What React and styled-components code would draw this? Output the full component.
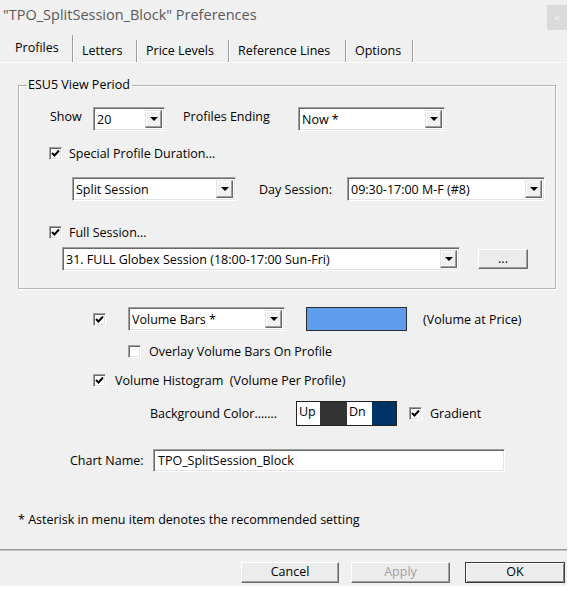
import React from 'react'
import styled, { createGlobalStyle } from 'styled-components'

const GlobalStyle = createGlobalStyle`
  body {
    margin: 0;
    background: #fff;
    font-family: "Open Sans", "Noto Sans", sans-serif;
    font-size: 12.5px;
    color: #000;
  }
`

const Window = styled.div`
  width: 567px;
  height: 586px;
  background: #f0f0f0;
  display: flex;
  flex-direction: column;
`

const TitleBar = styled.div`
  height: 30px;
  display: flex;
  justify-content: space-between;
  align-items: flex-start;
`

const Title = styled.div`
  padding: 5px 0 0 3px;
  font-size: 14.5px;
  color: #5a5a5a;
  white-space: nowrap;
`

const CloseBox = styled.div`
  margin-top: 5px;
  width: 20px;
  height: 25px;
  background: #dadada;
  color: #f4f4f4;
  font-size: 11px;
  display: flex;
  align-items: center;
  justify-content: center;
`

const TabStrip = styled.div`
  margin-top: 5px;
  height: 27px;
  padding-left: 10px;
  display: flex;
  align-items: flex-end;
  border-bottom: 1px solid #fbfbfb;
`

const Tab = styled.div`
  width: ${p => p.$w}px;
  height: ${p => (p.$active ? 27 : 22)}px;
  box-sizing: border-box;
  padding-left: ${p => (p.$active ? 5 : 9)}px;
  padding-top: ${p => (p.$active ? 4 : 2)}px;
  border-right: 1px solid #9c9c9c;
  box-shadow: 1px 0 0 #fff;
  white-space: nowrap;
`

const GroupBox = styled.div`
  position: relative;
  margin: 22px 11px 0 18px;
  padding: 21px 0 17px 0;
  border: 1px solid #b4b4b4;
  box-shadow: inset 1px 1px 0 #fff, 1px 1px 0 #fff;
`

const Legend = styled.span`
  position: absolute;
  top: -10px;
  left: 8px;
  padding: 0 2px 0 1px;
  background: #f0f0f0;
  white-space: nowrap;
`

const Row = styled.div`
  display: flex;
  align-items: center;
  height: ${p => p.$h || 24}px;
  margin-top: ${p => p.$top || 0}px;
  padding-left: ${p => p.$left || 0}px;
`

const Label = styled.span`
  flex: none;
  width: ${p => (p.$w ? `${p.$w}px` : 'auto')};
  margin-left: ${p => p.$ml || 0}px;
  margin-bottom: ${p => p.$up || 0}px;
  white-space: nowrap;
`

const Combo = styled.div`
  flex: none;
  box-sizing: border-box;
  width: ${p => p.$w}px;
  height: 24px;
  margin-left: ${p => p.$ml || 0}px;
  display: flex;
  align-items: center;
  background: #fff;
  border: 1px solid;
  border-color: #a0a0a0 #fff #fff #a0a0a0;
  box-shadow: inset 1px 1px 0 #696969, inset -1px -1px 0 #e3e3e3;
  padding: 2px;
`

const ComboText = styled.span`
  flex: 1;
  padding-left: 1px;
  white-space: nowrap;
  overflow: hidden;
`

const DropButton = styled.span`
  flex: none;
  width: 17px;
  height: 18px;
  box-sizing: border-box;
  background: #f0f0f0;
  border: 1px solid;
  border-color: #e3e3e3 #696969 #696969 #e3e3e3;
  box-shadow: inset -1px -1px 0 #a0a0a0, inset 1px 1px 0 #fff;
  display: flex;
  align-items: center;
  justify-content: center;
  &::after {
    content: '';
    border-left: 4px solid transparent;
    border-right: 4px solid transparent;
    border-top: 4px solid #000;
  }
`

const TextInput = styled(Combo)`
  padding-left: 4px;
  height: 23px;
`

const PushButton = styled.div`
  flex: none;
  box-sizing: border-box;
  width: ${p => p.$w}px;
  height: ${p => p.$h || 21}px;
  margin-left: ${p => p.$ml || 0}px;
  background: #ececec;
  border: 1px solid;
  border-color: ${p => p.$default ? '#3a3a3a' : '#fff #6a6a6a #6a6a6a #fff'};
  box-shadow: ${p => p.$default
    ? 'inset 1px 1px 0 #fff, inset -1px -1px 0 #8a8a8a'
    : 'inset -1px -1px 0 #a0a0a0'};
  color: ${p => p.$disabled ? '#a0a0a0' : '#000'};
  display: flex;
  align-items: center;
  justify-content: center;
  line-height: 1;
`

const Box = styled.span`
  flex: none;
  box-sizing: border-box;
  width: 13px;
  height: 13px;
  margin-left: ${p => p.$ml || 0}px;
  background: #fff;
  border: 1px solid;
  border-color: #a0a0a0 #fff #fff #a0a0a0;
  box-shadow: inset 1px 1px 0 #696969, inset -1px -1px 0 #e3e3e3;
  display: flex;
  align-items: center;
  justify-content: center;
`

const Swatch = styled.div`
  flex: none;
  box-sizing: border-box;
  width: ${p => p.$w}px;
  height: ${p => p.$h || 24}px;
  margin-left: ${p => p.$ml || 0}px;
  background: ${p => p.$color};
  border: 1px solid #2b2b2b;
`

const ColorStrip = styled.div`
  flex: none;
  display: flex;
  height: 25px;
  border: 1px solid #222;
  box-sizing: border-box;
`

const ColorCell = styled.div`
  width: ${p => p.$w}px;
  background: ${p => p.$color};
  padding: 4px 0 0 2px;
  box-sizing: border-box;
  line-height: 1;
`

const Divider = styled.div`
  margin-top: 22px;
  height: 1px;
  background: #9a9a9a;
  border-bottom: 1px solid #c4c4c4;
`

const ButtonRow = styled.div`
  display: flex;
  justify-content: flex-end;
  padding-right: 2px;
  margin-top: 11px;
`

function Check({ checked, ml }) {
  return (
    <Box $ml={ml}>
      {checked && (
        <svg width="9" height="9" viewBox="0 0 9 9">
          <polyline points="1,4 3.5,6.5 8,1.5" fill="none" stroke="#000" strokeWidth="2" />
        </svg>
      )}
    </Box>
  )
}

function Select({ w, ml, value }) {
  return (
    <Combo $w={w} $ml={ml}>
      <ComboText>{value}</ComboText>
      <DropButton />
    </Combo>
  )
}

export default function App() {
  return (
    <>
      <GlobalStyle />
      <Window>
        <TitleBar>
          <Title>"TPO_SplitSession_Block" Preferences</Title>
          <CloseBox>×</CloseBox>
        </TitleBar>

        <TabStrip>
          <Tab $w={63} $active>Profiles</Tab>
          <Tab $w={64}>Letters</Tab>
          <Tab $w={92}>Price Levels</Tab>
          <Tab $w={117}>Reference Lines</Tab>
          <Tab $w={67}>Options</Tab>
        </TabStrip>

        <GroupBox>
          <Legend>ESU5 View Period</Legend>
          <Row $left={31}>
            <Label $w={43} $up={6}>Show</Label>
            <Select w={72} value="20" />
            <Label $w={115} $ml={18} $up={6}>Profiles Ending</Label>
            <Select w={147} value="Now *" />
          </Row>
          <Row $top={14} $h={16} $left={30}>
            <Check checked />
            <Label $ml={7}>Special Profile Duration…</Label>
          </Row>
          <Row $top={16} $left={53}>
            <Select w={164} value="Split Session" />
            <Label $w={88} $ml={23}>Day Session:</Label>
            <Select w={198} value="09:30-17:00 M-F (#8)" />
          </Row>
          <Row $top={23} $h={16} $left={30}>
            <Check checked />
            <Label $ml={7}>Full Session…</Label>
          </Row>
          <Row $top={7} $left={43}>
            <Select w={398} value="31. FULL Globex Session (18:00-17:00 Sun-Fri)" />
            <PushButton $w={50} $h={20} $ml={18}>...</PushButton>
          </Row>
        </GroupBox>

        <Row $top={18} $left={93}>
          <Check checked />
          <Select w={157} ml={22} value="Volume Bars *" />
          <Swatch $w={101} $ml={21} $color="#5e9cec" />
          <Label $ml={16}>(Volume at Price)</Label>
        </Row>
        <Row $top={12} $h={16} $left={128}>
          <Check />
          <Label $ml={8}>Overlay Volume Bars On Profile</Label>
        </Row>
        <Row $top={13} $h={16} $left={93}>
          <Check checked />
          <Label $ml={9}>Volume Histogram&nbsp; (Volume Per Profile)</Label>
        </Row>
        <Row $top={13} $h={25} $left={150}>
          <Label $w={146}>Background Color…….</Label>
          <ColorStrip>
            <ColorCell $w={23} $color="#fff">Up</ColorCell>
            <ColorCell $w={27} $color="#333">&nbsp;</ColorCell>
            <ColorCell $w={25} $color="#fff">Dn</ColorCell>
            <ColorCell $w={24} $color="#003366">&nbsp;</ColorCell>
          </ColorStrip>
          <Check checked ml={12} />
          <Label $ml={8}>Gradient</Label>
        </Row>
        <Row $top={23} $h={23} $left={70}>
          <Label $w={83}>Chart Name:</Label>
          <TextInput $w={352}>TPO_SplitSession_Block</TextInput>
        </Row>
        <Row $top={39} $h={16} $left={18}>
          <Label>* Asterisk in menu item denotes the recommended setting</Label>
        </Row>

        <Divider />
        <ButtonRow>
          <PushButton $w={98}>Cancel</PushButton>
          <PushButton $w={99} $ml={12} $disabled>Apply</PushButton>
          <PushButton $w={100} $ml={15} $default>OK</PushButton>
        </ButtonRow>
      </Window>
    </>
  )
}
